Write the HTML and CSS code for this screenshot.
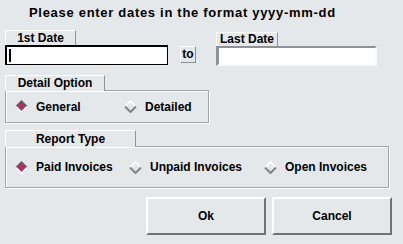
FILE: index.html
```html
<!DOCTYPE html>
<html lang="en">
<head>
  <meta charset="UTF-8" />
  <title>Report Dates</title>
  <link rel="stylesheet" href="styles.css">
</head>
<body>
  <div class="dialog">
    <p class="prompt">Please enter dates in the format yyyy-mm-dd</p>

    <div class="dates">
      <div class="field field-first">
        <div class="tab">1st Date</div>
        <div class="input input-focus"><span class="caret"></span></div>
      </div>
      <button class="to">to</button>
      <div class="field field-last">
        <div class="tab">Last Date</div>
        <div class="input input-plain"></div>
      </div>
    </div>

    <div class="group group-detail">
      <div class="tab">Detail Option</div>
      <div class="box">
        <label class="radio">
          <svg class="diamond" width="13" height="13" viewBox="0 0 13 13">
            <polygon points="6.5,1 12,6.5 6.5,12 1,6.5" fill="#a5365f"/>
            <path d="M1 6.5 L6.5 1 L12 6.5" fill="none" stroke="#6d5560" stroke-width="1.4"/>
            <path d="M1 6.5 L6.5 12 L12 6.5" fill="none" stroke="#ffffff" stroke-width="1.6"/>
          </svg>
          General
        </label>
        <label class="radio">
          <svg class="diamond" width="13" height="13" viewBox="0 0 13 13">
            <path d="M1 6.5 L6.5 1 L12 6.5" fill="none" stroke="#ffffff" stroke-width="1.6"/>
            <path d="M1 6.5 L6.5 12 L12 6.5" fill="none" stroke="#7f8388" stroke-width="2"/>
          </svg>
          Detailed
        </label>
      </div>
    </div>

    <div class="group group-report">
      <div class="tab">Report Type</div>
      <div class="box">
        <label class="radio">
          <svg class="diamond" width="13" height="13" viewBox="0 0 13 13">
            <polygon points="6.5,1 12,6.5 6.5,12 1,6.5" fill="#a5365f"/>
            <path d="M1 6.5 L6.5 1 L12 6.5" fill="none" stroke="#6d5560" stroke-width="1.4"/>
            <path d="M1 6.5 L6.5 12 L12 6.5" fill="none" stroke="#ffffff" stroke-width="1.6"/>
          </svg>
          Paid Invoices
        </label>
        <label class="radio">
          <svg class="diamond" width="13" height="13" viewBox="0 0 13 13">
            <path d="M1 6.5 L6.5 1 L12 6.5" fill="none" stroke="#ffffff" stroke-width="1.6"/>
            <path d="M1 6.5 L6.5 12 L12 6.5" fill="none" stroke="#7f8388" stroke-width="2"/>
          </svg>
          Unpaid Invoices
        </label>
        <label class="radio">
          <svg class="diamond" width="13" height="13" viewBox="0 0 13 13">
            <path d="M1 6.5 L6.5 1 L12 6.5" fill="none" stroke="#ffffff" stroke-width="1.6"/>
            <path d="M1 6.5 L6.5 12 L12 6.5" fill="none" stroke="#7f8388" stroke-width="2"/>
          </svg>
          Open Invoices
        </label>
      </div>
    </div>

    <div class="actions">
      <button class="btn">Ok</button>
      <button class="btn">Cancel</button>
    </div>
  </div>
</body>
</html>
```

FILE: styles.css
```css
body {
  margin: 0;
  background: #e5e8eb;
  color: #000;
  font-family: 'Liberation Sans', Arial, sans-serif;
  font-weight: bold;
  font-size: 12px;
}

.dialog {
  padding-top: 6px;
}

.prompt {
  margin: 0;
  padding-left: 29px;
  font-size: 13px;
  letter-spacing: 0.7px;
  line-height: 14px;
}

/* date fields */

.dates {
  display: flex;
  align-items: flex-start;
  margin-top: 10px;
  padding-left: 5px;
}

.field-first {
  width: 163px;
}

.field-first .tab {
  width: 71px;
  height: 15px;
}

.field-last {
  width: 161px;
  margin-left: 20px;
  margin-top: 2px;
}

.field-last .tab {
  width: 62px;
  height: 14px;
  line-height: 13px;
}

.tab {
  box-sizing: border-box;
  text-align: center;
  line-height: 14px;
  border-top: 1px solid #fff;
  border-left: 1px solid #fff;
  border-right: 1px solid #8f9499;
  background: #e5e8eb;
  position: relative;
  z-index: 1;
}

.input {
  box-sizing: border-box;
  height: 20px;
  background: #fff;
  display: flex;
  align-items: center;
  padding-left: 2px;
}

.input-focus {
  border-style: solid;
  border-color: #000;
  border-width: 2px 1px 1px 2px;
}

.input-plain {
  border-style: solid;
  border-width: 2px 2px 2px 3px;
  border-color: #8e9297 #f8f9fa #f8f9fa #8e9297;
}

.caret {
  width: 2px;
  height: 13px;
  background: #000;
}

.to {
  box-sizing: border-box;
  margin: 16px 0 0 12px;
  width: 16px;
  height: 17px;
  padding: 0;
  font: inherit;
  line-height: 13px;
  background: #e5e8eb;
  border-style: solid;
  border-width: 1px;
  border-color: #fff #8a8f94 #8a8f94 #fff;
}

/* option groups */

.group {
  margin-left: 5px;
}

.group-detail {
  width: 204px;
  margin-top: 9px;
}

.group-detail .tab {
  width: 100px;
  height: 16px;
  line-height: 15px;
}

.group-report {
  width: 384px;
  margin-top: 7px;
}

.group-report .tab {
  width: 131px;
  height: 17px;
  line-height: 16px;
}

.box {
  box-sizing: border-box;
  margin-top: -1px;
  border: 1px solid #a0a5aa;
  box-shadow: inset 1px 1px 0 #fff, 1px 1px 0 #fff;
  display: grid;
  align-items: center;
  padding-left: 9px;
}

.group-detail .box {
  height: 33px;
  grid-template-columns: 109px auto;
}

.group-report .box {
  height: 42px;
  grid-template-columns: 114px 135px auto;
}

.radio {
  display: flex;
  align-items: center;
  gap: 8px;
  line-height: 14px;
  white-space: nowrap;
}

.diamond {
  display: block;
  flex: none;
}

/* buttons */

.actions {
  display: flex;
  justify-content: flex-end;
  gap: 6px;
  margin-top: 9px;
  padding-right: 11px;
}

.btn {
  box-sizing: border-box;
  width: 120px;
  height: 38px;
  padding: 0;
  font: inherit;
  background: #e5e8eb;
  border-style: solid;
  border-width: 2px;
  border-color: #fff #6e7378 #6e7378 #fff;
}
```
